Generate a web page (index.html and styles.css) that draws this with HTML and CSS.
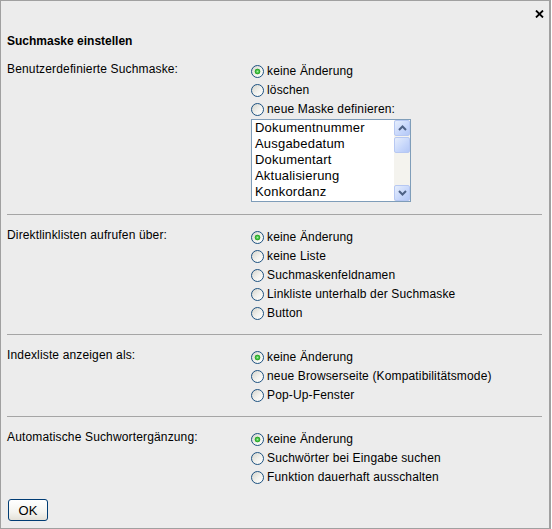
FILE: index.html
```html
<!DOCTYPE html>
<html lang="de">
<head>
<meta charset="utf-8">
<title>Suchmaske einstellen</title>
<link rel="stylesheet" href="styles.css">
</head>
<body>
<div class="dialog">
  <div class="topbar">
    <button class="close" type="button" aria-label="Schließen">
      <svg width="9" height="8" viewBox="0 0 9 8"><path d="M1 0.5 L8 7.5 M8 0.5 L1 7.5" stroke="#000" stroke-width="1.8" fill="none"/></svg>
    </button>
  </div>
  <h1 class="title">Suchmaske einstellen</h1>

  <section class="group">
    <div class="group-label">Benutzerdefinierte Suchmaske:</div>
    <div class="options">
      <label class="opt"><input class="radio" type="radio" name="g1" checked><span>keine Änderung</span></label>
      <label class="opt"><input class="radio" type="radio" name="g1"><span>löschen</span></label>
      <label class="opt"><input class="radio" type="radio" name="g1"><span>neue Maske definieren:</span></label>
      <div class="listbox">
        <ul class="items">
          <li>Dokumentnummer</li>
          <li>Ausgabedatum</li>
          <li>Dokumentart</li>
          <li>Aktualisierung</li>
          <li>Konkordanz</li>
        </ul>
        <div class="scrollbar">
          <div class="sbtn"><svg width="9" height="6" viewBox="0 0 9 6"><path d="M1 5 L4.5 1.5 L8 5" stroke="#4d6185" stroke-width="2" fill="none"/></svg></div>
          <div class="thumb"></div>
          <div class="track"></div>
          <div class="sbtn"><svg width="9" height="6" viewBox="0 0 9 6"><path d="M1 1 L4.5 4.5 L8 1" stroke="#4d6185" stroke-width="2" fill="none"/></svg></div>
        </div>
      </div>
    </div>
  </section>
  <hr class="sep">

  <section class="group">
    <div class="group-label">Direktlinklisten aufrufen über:</div>
    <div class="options">
      <label class="opt"><input class="radio" type="radio" name="g2" checked><span>keine Änderung</span></label>
      <label class="opt"><input class="radio" type="radio" name="g2"><span>keine Liste</span></label>
      <label class="opt"><input class="radio" type="radio" name="g2"><span>Suchmaskenfeldnamen</span></label>
      <label class="opt"><input class="radio" type="radio" name="g2"><span>Linkliste unterhalb der Suchmaske</span></label>
      <label class="opt"><input class="radio" type="radio" name="g2"><span>Button</span></label>
    </div>
  </section>
  <hr class="sep">

  <section class="group">
    <div class="group-label">Indexliste anzeigen als:</div>
    <div class="options">
      <label class="opt"><input class="radio" type="radio" name="g3" checked><span>keine Änderung</span></label>
      <label class="opt"><input class="radio" type="radio" name="g3"><span>neue Browserseite (Kompatibilitätsmode)</span></label>
      <label class="opt"><input class="radio" type="radio" name="g3"><span>Pop-Up-Fenster</span></label>
    </div>
  </section>
  <hr class="sep">

  <section class="group">
    <div class="group-label">Automatische Suchwortergänzung:</div>
    <div class="options">
      <label class="opt"><input class="radio" type="radio" name="g4" checked><span>keine Änderung</span></label>
      <label class="opt"><input class="radio" type="radio" name="g4"><span>Suchwörter bei Eingabe suchen</span></label>
      <label class="opt"><input class="radio" type="radio" name="g4"><span>Funktion dauerhaft ausschalten</span></label>
    </div>
  </section>

  <div class="footer">
    <button class="ok" type="button">OK</button>
  </div>
</div>
</body>
</html>
```
FILE: styles.css
```css
* { box-sizing: border-box; }
html, body { margin: 0; padding: 0; background: #ffffff; }
body {
  font-family: "Liberation Sans", Arial, sans-serif;
  font-size: 12px;
  color: #000;
}
.dialog {
  width: 551px;
  height: 529px;
  background: #ececec;
  border: 1px solid #a0a0a0;
  border-right-width: 2px;
  padding: 0 6px;
  overflow: hidden;
}
.topbar {
  height: 26px;
  display: flex;
  justify-content: flex-end;
  align-items: center;
}
.close {
  border: 0;
  background: transparent;
  padding: 0;
  margin: 0 -1px 0 0;
  width: 9px;
  height: 8px;
  display: flex;
}
.title {
  font-size: 12px;
  line-height: 15px;
  font-weight: bold;
  margin: 7px 0 13px;
}
.group {
  display: grid;
  grid-template-columns: 244px 1fr;
  padding: 0 0 11px;
  letter-spacing: 0.15px;
}
.sep + .group { padding-top: 13px; }
.group-label {
  line-height: 15px;
}
.options {
  display: flex;
  flex-direction: column;
}
.opt {
  display: flex;
  align-items: center;
  height: 19px;
  line-height: 15px;
}
.radio {
  appearance: none;
  -webkit-appearance: none;
  width: 13px;
  height: 13px;
  margin: 0 3px 0 0;
  border: 1px solid #1c5180;
  border-radius: 50%;
  background: linear-gradient(135deg, #d4d4cc 0%, #f2f2ee 55%, #ffffff 100%);
  flex: none;
}
.radio:checked {
  background:
    radial-gradient(circle at 50% 50%, #a8f0a8 0, #5fcf5f 1px, #21a121 2.5px, rgba(33,161,33,0) 3.2px),
    linear-gradient(135deg, #d4d4cc 0%, #f2f2ee 55%, #ffffff 100%);
}
.listbox {
  width: 160px;
  height: 83px;
  margin-bottom: 1px;
  border: 1px solid #7f9db9;
  background: #fff;
  display: flex;
  letter-spacing: 0;
}
.items {
  list-style: none;
  margin: 0;
  padding: 0 0 0 3px;
  flex: 1;
  font-size: 13px;
  line-height: 16px;
  letter-spacing: 0.2px;
}
.scrollbar {
  width: 16px;
  display: flex;
  flex-direction: column;
  background: #f4f3ee;
}
.sbtn, .thumb {
  height: 16px;
  border: 1px solid #b7c8f2;
  border-radius: 2px;
  background: linear-gradient(135deg, #e6eefc 0%, #c6d6fb 60%, #b4c8f6 100%);
  display: flex;
  align-items: center;
  justify-content: center;
}
.thumb {
  height: 16px;
  margin-top: 1px;
}
.track { flex: 1; }
.sep {
  margin: 0;
  border: 0;
  border-top: 1px solid #a5a5a5;
  height: 0;
  margin-right: 1px;
}
.footer {
  display: flex;
  padding-top: 1px;
  padding-left: 1px;
}
.ok {
  width: 40px;
  height: 22px;
  border: 1px solid #003c74;
  border-radius: 3px;
  background: linear-gradient(#ffffff 0%, #f4f4f0 60%, #e4e1d8 100%);
  font-family: "Liberation Sans", Arial, sans-serif;
  font-size: 13px;
  color: #000;
  padding: 0;
}
```
